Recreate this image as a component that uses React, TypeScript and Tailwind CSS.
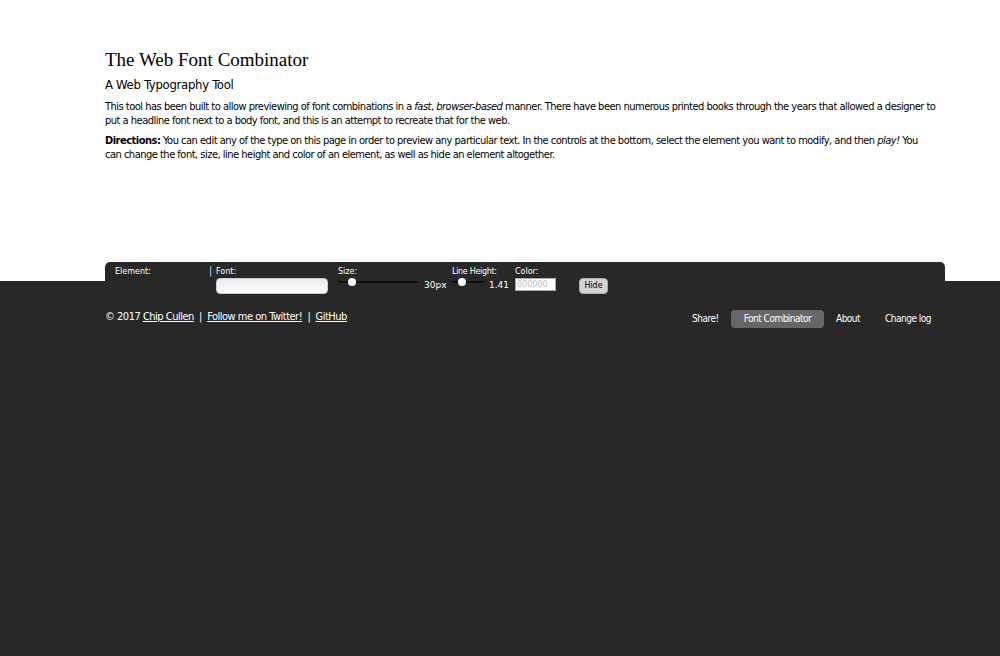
export default function App() {
  const body = { fontFamily: '"DejaVu Sans Condensed", "DejaVu Sans", Verdana, sans-serif', letterSpacing: "-0.5px" };
  const ui = { fontFamily: '"DejaVu Sans", Verdana, sans-serif' };

  return (
    <div className="w-[1000px] h-[656px] bg-[#282828] flex flex-col overflow-hidden">
      {/* Page content */}
      <div className="bg-white h-[281px] relative">
        <div className="ml-[105px] w-[840px] pt-[49px] text-black" style={body}>
          <h1
            className="text-[19px] leading-[22px] tracking-normal"
            style={{ fontFamily: '"Liberation Serif", "Times New Roman", serif' }}
          >
            The Web Font Combinator
          </h1>
          <h2 className="text-[13px] leading-[16px] mt-[6px] tracking-[-0.3px]">A Web Typography Tool</h2>
          <p className="text-[11px] leading-[14px] mt-[7px]">
            This tool has been built to allow previewing of font combinations in a <em>fast</em>, <em>browser-based</em> manner. There have been numerous printed books through the years that allowed a designer to put a headline font next to a body font, and this is an attempt to recreate that for the web.
          </p>
          <p className="text-[11px] leading-[14px] mt-[6px]">
            <strong>Directions:</strong> You can edit any of the type on this page in order to preview any particular text. In the controls at the bottom, select the element you want to modify, and then <em>play!</em> You
            <br />
            can change the font, size, line height and color of an element, as well as hide an element altogether.
          </p>
        </div>

        {/* Controls bar */}
        <div
          className="absolute left-[105px] top-[262px] w-[840px] h-[36px] bg-[#282828] rounded-t-[5px] text-white text-[8px] leading-[10px] flex"
          style={ui}
        >
          <div className="w-[104px] pl-[10px] pt-[5px]">Element:</div>
          <div className="w-[7px] pt-[4px] text-[10px] text-gray-300">|</div>
          <div className="w-[122px] pt-[5px] flex flex-col">
            <span>Font:</span>
            <div className="mt-[1px] w-[112px] h-[16px] rounded-[4px] bg-gradient-to-b from-[#ececec] to-white border border-[#ccc]" />
          </div>
          <div className="w-[114px] pt-[5px] flex flex-col">
            <span>Size:</span>
            <div className="flex items-start">
              <div className="relative w-[80px] h-[10px]">
                <div className="absolute left-0 right-0 top-[4px] h-[2px] bg-[#111]" />
                <div className="absolute left-[10px] top-[1px] w-[8px] h-[8px] rounded-full bg-white" />
              </div>
              <span className="ml-[6px] mt-[3px] text-[9px]">30px</span>
            </div>
          </div>
          <div className="w-[63px] pt-[5px] flex flex-col">
            <span className="tracking-[-0.3px]">Line Height:</span>
            <div className="flex items-start">
              <div className="relative w-[32px] h-[10px]">
                <div className="absolute left-0 right-0 top-[4px] h-[2px] bg-[#111]" />
                <div className="absolute left-[6px] top-[1px] w-[8px] h-[8px] rounded-full bg-white" />
              </div>
              <span className="ml-[5px] mt-[3px] text-[9px]">1.41</span>
            </div>
          </div>
          <div className="w-[64px] pt-[5px] flex flex-col">
            <span>Color:</span>
            <div className="mt-[1px] w-[41px] h-[13px] bg-white border border-[#aaa] text-[#bbb] text-[8px] leading-[11px] pl-[1px]">000000</div>
          </div>
          <div className="pt-[16px]">
            <div className="w-[29px] h-[16px] rounded-[4px] bg-[#d4d4d4] border border-[#aaa] text-black text-[8px] leading-[14px] text-center">Hide</div>
          </div>
        </div>
      </div>

      {/* Footer */}
      <div className="ml-[105px] w-[840px] flex justify-between items-start pt-[29px] text-white text-[11px]" style={body}>
        <div className="leading-[14px] whitespace-nowrap">
          © 2017 <a className="underline">Chip Cullen</a>&nbsp; | &nbsp;<a className="underline">Follow me on Twitter!</a>&nbsp; | &nbsp;<a className="underline">GitHub</a>
        </div>
        <nav className="flex items-center text-[10px] whitespace-nowrap" style={body}>
          <span className="w-[27px] h-[18px] leading-[18px]">Share!</span>
          <span className="ml-[12px] w-[93px] h-[18px] leading-[18px] text-center rounded-[4px] bg-[#666666]">Font Combinator</span>
          <span className="ml-[12px] w-[24px] h-[18px] leading-[18px]">About</span>
          <span className="ml-[25px] w-[47px] h-[18px] leading-[18px]">Change log</span>
          <span className="w-[13px]" />
        </nav>
      </div>
    </div>
  );
}
